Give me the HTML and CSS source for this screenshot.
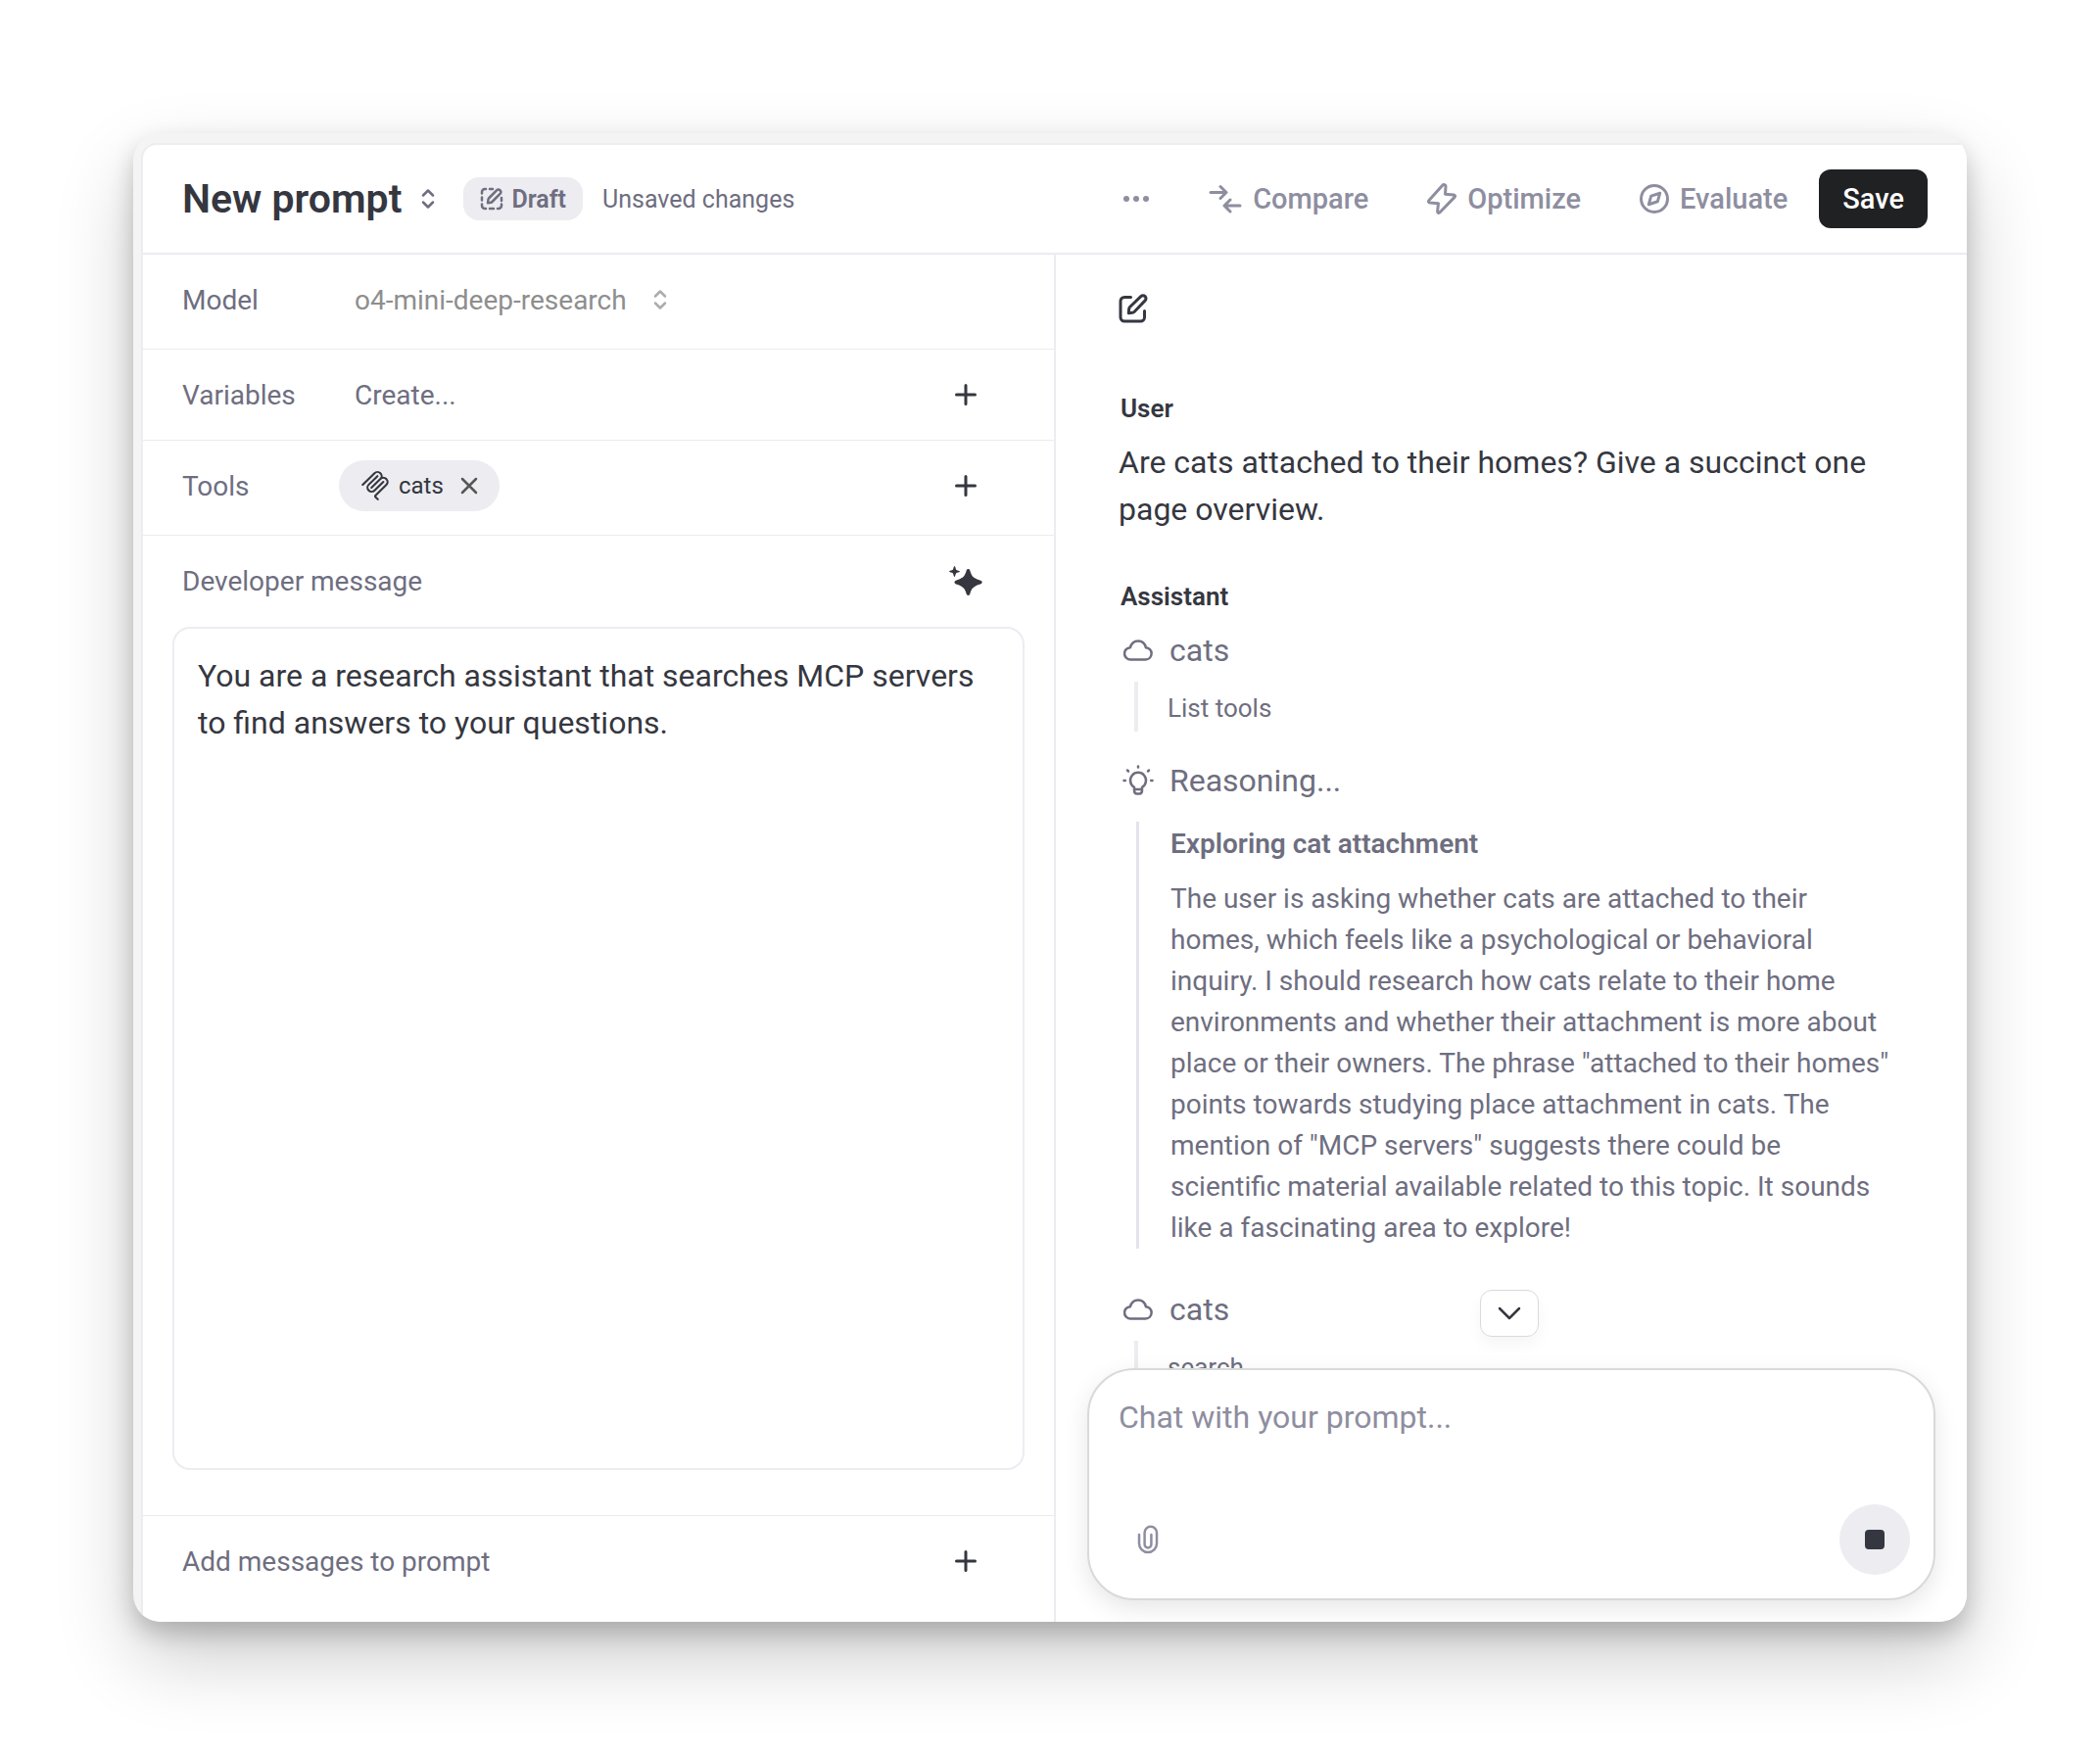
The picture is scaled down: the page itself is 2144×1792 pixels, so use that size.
FILE: index.html
```html
<!DOCTYPE html>
<html lang="en">

<head>
    <meta charset="UTF-8">
    <meta name="viewport" content="width=device-width, initial-scale=1.0">
    <title>New prompt</title>
    <link rel="stylesheet" href="styles.css">
</head>

<body>
    <!-- Shared icons -->
    <svg class="sprite" aria-hidden="true">
        <symbol id="icon-updown" viewBox="0 0 14 22">
            <path d="M2 7.5l5-5 5 5M2 14.5l5 5 5-5" />
        </symbol>
        <symbol id="icon-plus" viewBox="0 0 22 22">
            <path d="M11 1.5v19M1.5 11h19" />
        </symbol>
        <symbol id="icon-cloud" viewBox="0 0 30 22">
            <path d="M7.5 20.5a6 6 0 0 1-.6-12.3C8 4 11.2 1.4 15 1.4s7 2.6 7.9 6.8c3.3.4 5.7 2.8 5.7 6.1 0 3.5-2.6 6.2-6.1 6.2z" />
        </symbol>
    </svg>

    <div class="window">
        <div class="card">
            <!-- Top bar -->
            <header class="topbar">
                <button type="button" class="title-button">
                    <h1>New prompt</h1>
                    <svg class="icon updown" width="14" height="22"><use href="#icon-updown" /></svg>
                </button>
                <span class="badge">
                    <svg class="icon" width="24" height="24" viewBox="0 0 24 24">
                        <path d="M2 6.5V5a3 3 0 0 1 3-3h1M10 2h3M2 10.5v3M2 17.5V19a3 3 0 0 0 3 3h1M10 22h4M18 22h1a3 3 0 0 0 3-3v-1.5M22 11v3" />
                        <path d="M9 11.5l8.3-8.4a2.5 2.5 0 0 1 3.5 3.5L12.5 15a3 3 0 0 1-1.5.8l-3 .5.4-3a3 3 0 0 1 .6-1.8z" />
                    </svg>
                    Draft
                </span>
                <span class="status">Unsaved changes</span>

                <nav class="actions">
                    <button type="button" aria-label="More">
                        <svg width="28" height="8" viewBox="0 0 28 8" fill="currentColor">
                            <circle cx="4" cy="4" r="3" />
                            <circle cx="14" cy="4" r="3" />
                            <circle cx="24" cy="4" r="3" />
                        </svg>
                    </button>
                    <button type="button">
                        <svg class="icon bold" width="34" height="30" viewBox="0 0 34 30">
                            <path d="M2 8.5h16M12 2.5l6 6-6 6M32 22H16M22 16l-6 6 6 6" />
                        </svg>
                        Compare
                    </button>
                    <button type="button">
                        <svg class="icon bold" width="30" height="32" viewBox="0 0 30 32">
                            <path d="M15.7 2.3L2 17.6c-1 1.2-.5 2.3 1 2.5l8.5.6-.9 8.1c-.1 1.6 1.5 2.1 2.5 1L28 14.4c1-1.2.5-2.2-1-2.4l-8.5-.7.5-8c0-1.6-2.2-2.3-3.3-1z" />
                        </svg>
                        Optimize
                    </button>
                    <button type="button">
                        <svg class="icon bold" width="30" height="30" viewBox="0 0 30 30">
                            <circle cx="15" cy="15" r="13.5" />
                            <path d="M20.7 9.3l-2.4 8.5-9 2.9 2.4-8.6z" />
                        </svg>
                        Evaluate
                    </button>
                    <button type="button" class="save">Save</button>
                </nav>
            </header>

            <div class="panes">
                <!-- Prompt settings -->
                <section class="settings">
                    <div class="row tall">
                        <label class="row-label" for="model">Model</label>
                        <select id="model" class="model">
                            <option>o4-mini-deep-research</option>
                        </select>
                        <svg class="icon updown light" width="14" height="22"><use href="#icon-updown" /></svg>
                    </div>
                    <div class="row">
                        <span class="row-label">Variables</span>
                        <button type="button" class="create">Create...</button>
                        <button type="button" class="add" aria-label="Add variable">
                            <svg class="icon bold" width="22" height="22"><use href="#icon-plus" /></svg>
                        </button>
                    </div>
                    <div class="row tall">
                        <span class="row-label">Tools</span>
                        <span class="chip">
                            <svg width="30" height="32" viewBox="0 0 24 24" fill="currentColor">
                                <path d="M15.688 2.343a2.588 2.588 0 00-3.61 0l-9.626 9.44a.863.863 0 01-1.203 0 .823.823 0 010-1.18l9.626-9.44a4.313 4.313 0 016.016 0 4.116 4.116 0 011.204 3.54 4.3 4.3 0 013.609 1.18l.05.05a4.115 4.115 0 010 5.9l-8.706 8.537a.274.274 0 000 .393l1.788 1.754a.823.823 0 010 1.18.863.863 0 01-1.203 0l-1.788-1.753a1.92 1.92 0 010-2.754l8.706-8.538a2.47 2.47 0 000-3.54l-.05-.049a2.588 2.588 0 00-3.607-.003l-7.172 7.034-.002.002-.098.097a.863.863 0 01-1.204 0 .823.823 0 010-1.18l7.273-7.133a2.47 2.47 0 00-.003-3.537z" />
                                <path d="M14.485 4.703a.823.823 0 000-1.18.863.863 0 00-1.204 0l-7.119 6.982a4.115 4.115 0 000 5.9 4.314 4.314 0 006.016 0l7.12-6.982a.823.823 0 000-1.18.863.863 0 00-1.204 0l-7.119 6.982a2.588 2.588 0 01-3.61 0 2.47 2.47 0 010-3.54l7.12-6.982z" />
                            </svg>
                            cats
                            <button type="button" class="remove" aria-label="Remove cats">
                                <svg class="icon" width="18" height="18" viewBox="0 0 18 18">
                                    <path d="M2 2l14 14M16 2L2 16" />
                                </svg>
                            </button>
                        </span>
                        <button type="button" class="add" aria-label="Add tool">
                            <svg class="icon bold" width="22" height="22"><use href="#icon-plus" /></svg>
                        </button>
                    </div>
                    <div class="row plain">
                        <label for="developer">Developer message</label>
                        <button type="button" class="add" aria-label="Generate">
                            <svg width="34" height="32" viewBox="0 0 34 32" fill="currentColor">
                                <path d="M19.5 3c1 0 1.5.6 1.8 1.4 1.6 5.6 3 7.5 9.6 9.8 1.5.5 2.8 1 2.8 2.3s-1.3 1.8-2.8 2.3c-6.6 2.3-8 4.2-9.6 9.8-.3.9-.8 1.4-1.8 1.4s-1.5-.5-1.8-1.4c-1.6-5.6-3-7.5-9.6-9.8-1.5-.5-2.6-1-2.6-2.3s1.1-1.8 2.6-2.3c6.6-2.3 8-4.2 9.6-9.8C18 3.6 18.5 3 19.5 3z" />
                                <path d="M5.5 0c.9 0 1.1 2.9 1.7 3.7s3.8 1 3.8 1.8-3 1.1-3.8 1.8S6.4 11 5.5 11s-1-2.9-1.7-3.7S0 6.4 0 5.5s3-1 3.8-1.8S4.6 0 5.5 0z" />
                            </svg>
                        </button>
                    </div>
                    <textarea id="developer" class="developer">You are a research assistant that searches MCP servers to find answers to your questions.</textarea>
                    <div class="row last">
                        <span>Add messages to prompt</span>
                        <button type="button" class="add" aria-label="Add message">
                            <svg class="icon bold" width="22" height="22"><use href="#icon-plus" /></svg>
                        </button>
                    </div>
                </section>

                <!-- Conversation -->
                <section class="chat">
                    <div class="messages">
                        <button type="button" class="new-chat" aria-label="New chat">
                            <svg class="icon bold" width="30" height="30" viewBox="0 0 30 30">
                                <path d="M12.5 3.5H6a4 4 0 0 0-4 4V24a4 4 0 0 0 4 4h16.5a4 4 0 0 0 4-4v-6.5" />
                                <path d="M11.5 13.5L22.8 2.6a3 3 0 0 1 4.3 4.3L16.2 18.2a4 4 0 0 1-2.2 1.1l-3.7.5.3-4a4 4 0 0 1 .9-2.3z" />
                            </svg>
                        </button>

                        <h2>User</h2>
                        <p class="user-text">Are cats attached to their homes? Give a succinct one page overview.</p>

                        <h2>Assistant</h2>
                        <div class="step">
                            <svg class="icon" width="30" height="22"><use href="#icon-cloud" /></svg>
                            cats
                        </div>
                        <div class="call">List tools</div>

                        <div class="step after-call">
                            <svg class="icon" width="32" height="32" viewBox="0 0 32 32">
                                <path d="M12 26v-3.2a8 8 0 1 1 8 0V26c0 2-1 3.5-2.7 3.5h-2.6C13 29.5 12 28 12 26zM12.5 25h7" />
                                <path d="M16 1.5v1M5 5.5l1 1M27 5.5l-1 1M1.5 16h1.3M29.2 16h1.3" />
                            </svg>
                            Reasoning...
                        </div>
                        <div class="reasoning">
                            <h3>Exploring cat attachment</h3>
                            <p>The user is asking whether cats are attached to their homes, which feels like a psychological or behavioral inquiry. I should research how cats relate to their home environments and whether their attachment is more about place or their owners. The phrase "attached to their homes" points towards studying place attachment in cats. The mention of "MCP servers" suggests there could be scientific material available related to this topic. It sounds like a fascinating area to explore!</p>
                        </div>

                        <div class="step">
                            <svg class="icon" width="30" height="22"><use href="#icon-cloud" /></svg>
                            cats
                        </div>
                        <div class="call">search</div>
                    </div>

                    <form class="composer">
                        <button type="button" class="scroll-down" aria-label="Scroll to bottom">
                            <svg class="icon" width="24" height="14" viewBox="0 0 24 14">
                                <path d="M2 2l10 10L22 2" />
                            </svg>
                        </button>
                        <textarea aria-label="Chat with your prompt" placeholder="Chat with your prompt..." rows="1"></textarea>
                        <div class="composer-actions">
                            <button type="button" class="attach" aria-label="Attach file">
                                <svg class="icon" width="22" height="30" viewBox="0 0 22 30">
                                    <path d="M2 10v9a9 9 0 0 0 18 0V8a6.2 6.2 0 0 0-12.4 0v12a3.4 3.4 0 0 0 6.8 0V10" />
                                </svg>
                            </button>
                            <button type="button" class="stop" aria-label="Stop"></button>
                        </div>
                    </form>
                </section>
            </div>
        </div>
    </div>
</body>

</html>
```
FILE: styles.css
```css
* {
    box-sizing: border-box;
}

body {
    margin: 0;
    height: 100vh;
    padding: 136px;
    background-color: #fff;
    color: #353740;
    font-family: Roboto, sans-serif;
    font-size: 28px;
}

h1, h2, h3, p {
    margin: 0;
}

button, select, textarea {
    margin: 0;
    padding: 0;
    border: none;
    background: none;
    color: inherit;
    font: inherit;
}

button {
    cursor: pointer;
}

svg {
    flex: none;
    display: block;
}

.sprite {
    position: absolute;
    width: 0;
    height: 0;
}

.icon {
    fill: none;
    stroke: currentColor;
    stroke-width: 2.5;
    stroke-linecap: round;
    stroke-linejoin: round;
}

.icon.bold {
    stroke-width: 3;
}

/* Window */
.window {
    height: 100%;
    padding: 10px 0 0 8px;
    overflow: hidden;
    border-radius: 28px;
    background-color: #f4f4f4;
    box-shadow: 0 12px 24px rgba(0, 0, 0, 0.2), 0 36px 80px rgba(0, 0, 0, 0.2);
}

.card {
    display: flex;
    flex-direction: column;
    height: 100%;
    border-top: 2px solid #ececf1;
    border-left: 2px solid #ececf1;
    border-top-left-radius: 16px;
    background-color: #fff;
}

/* Top bar */
.topbar {
    display: flex;
    align-items: center;
    height: 112px;
    padding: 0 40px;
    border-bottom: 2px solid #ececf1;
}

.title-button {
    display: flex;
    align-items: center;
    gap: 20px;
}

h1 {
    font-size: 41px;
    font-weight: 600;
}

.updown {
    color: #6e6e80;
}

.updown.light {
    margin-left: 27px;
    color: #acacac;
}

.badge {
    display: flex;
    align-items: center;
    gap: 8px;
    height: 44px;
    margin: 0 20px 0 29px;
    padding: 0 17px;
    border-radius: 16px;
    background-color: #ececf1;
    color: #6e6e80;
    font-size: 25px;
    font-weight: 600;
}

.status {
    color: #6e6e80;
    font-size: 25px;
}

.actions {
    display: flex;
    align-items: center;
    gap: 60px;
    margin-left: auto;
    color: #8e8ea0;
    font-size: 29px;
    font-weight: 500;
}

.actions button {
    display: flex;
    align-items: center;
    gap: 11px;
}

.actions .save {
    height: 60px;
    margin-left: -28px;
    padding: 0 24px;
    border-radius: 12px;
    background-color: #202123;
    color: #fff;
}

.panes {
    flex: 1;
    display: grid;
    grid-template-columns: calc(50% - 1px) 1fr;
    min-height: 0;
}

/* Settings */
.settings {
    display: flex;
    flex-direction: column;
    color: #6e6e80;
}

.row {
    flex: none;
    display: flex;
    align-items: center;
    height: 93px;
    padding: 0 70px 0 40px;
    border-bottom: 1px solid #ececec;
}

.row.tall {
    height: 97px;
    padding-bottom: 4px;
}

.row.plain {
    border-bottom: none;
}

.row.last {
    height: 109px;
    padding-bottom: 16px;
    border-top: 1px solid #ececec;
    border-bottom: none;
}

.row-label {
    flex: 0 0 176px;
}

.model {
    appearance: none;
    color: #8e8e8e;
}

.add {
    display: flex;
    justify-content: center;
    width: 40px;
    margin-left: auto;
    color: #353740;
}

.chip {
    display: flex;
    align-items: center;
    gap: 9px;
    height: 52px;
    margin-left: -16px;
    padding: 0 22px;
    border-radius: 26px;
    background-color: #ececf1;
    color: #353740;
    font-size: 24px;
}

.remove {
    margin-left: 8px;
    color: #565656;
}

.developer {
    flex: 1;
    margin: 0 30px 46px;
    padding: 24px;
    border: 2px solid #ececf1;
    border-radius: 18px;
    color: #353740;
    font-size: 32px;
    line-height: 48px;
    resize: none;
}

/* Chat */
.chat {
    display: flex;
    flex-direction: column;
    min-height: 0;
    border-left: 2px solid #ececf1;
}

.messages {
    flex: 1;
    min-height: 0;
    overflow: hidden;
    padding: 40px 72px 0 64px;
}

.new-chat {
    display: block;
    margin-bottom: 70px;
}

h2 {
    padding-left: 2px;
    font-size: 26px;
    font-weight: 600;
    line-height: 34px;
}

.user-text {
    margin: 14px 0 48px;
    font-size: 32px;
    line-height: 48px;
}

h2 + .step {
    margin-top: 14px;
}

.step {
    display: flex;
    align-items: center;
    gap: 17px;
    padding-left: 5px;
    color: #6e6e80;
    font-size: 32px;
    line-height: 48px;
}

.step.after-call {
    gap: 16px;
    margin-top: 26px;
    padding-left: 4px;
}

.call {
    margin: 8px 0 0 16px;
    padding: 3px 0 0 30px;
    border-left: 4px solid #ececf1;
    color: #6e6e80;
    font-size: 26px;
    line-height: 48px;
}

.reasoning {
    margin: 18px 0 38px 18px;
    padding: 2px 0 0 32px;
    border-left: 3px solid #e3e3ec;
    color: #6e6e80;
    line-height: 42px;
}

h3 {
    margin-bottom: 14px;
    font-size: 28px;
    font-weight: 600;
}

/* Composer */
.composer {
    position: relative;
    flex: none;
    display: flex;
    flex-direction: column;
    justify-content: space-between;
    height: 237px;
    margin: 0 32px 22px;
    padding: 24px;
    border: 2px solid #d9d9d9;
    border-radius: 48px;
    background-color: #fff;
    box-shadow: 0 8px 24px rgba(0, 0, 0, 0.1);
}

.composer textarea {
    padding: 0 6px;
    height: 48px;
    font-size: 32px;
    line-height: 48px;
    resize: none;
}

.composer textarea::placeholder {
    color: #8e8ea0;
}

.composer-actions {
    display: flex;
    align-items: center;
    justify-content: space-between;
}

.attach {
    display: flex;
    justify-content: center;
    width: 60px;
    margin-left: 6px;
    color: #8e8ea0;
}

.stop {
    display: grid;
    place-items: center;
    width: 72px;
    height: 72px;
    border-radius: 50%;
    background-color: #ececf1;
}

.stop::before {
    content: "";
    width: 20px;
    height: 20px;
    border-radius: 4px;
    background-color: #353740;
}

.scroll-down {
    position: absolute;
    bottom: calc(100% + 34px);
    left: calc(50% - 32px);
    display: grid;
    place-items: center;
    width: 60px;
    height: 48px;
    border: 1px solid #d9d9e3;
    border-radius: 12px;
    background-color: #fff;
    box-shadow: 0 8px 16px rgba(0, 0, 0, 0.04);
}
```
